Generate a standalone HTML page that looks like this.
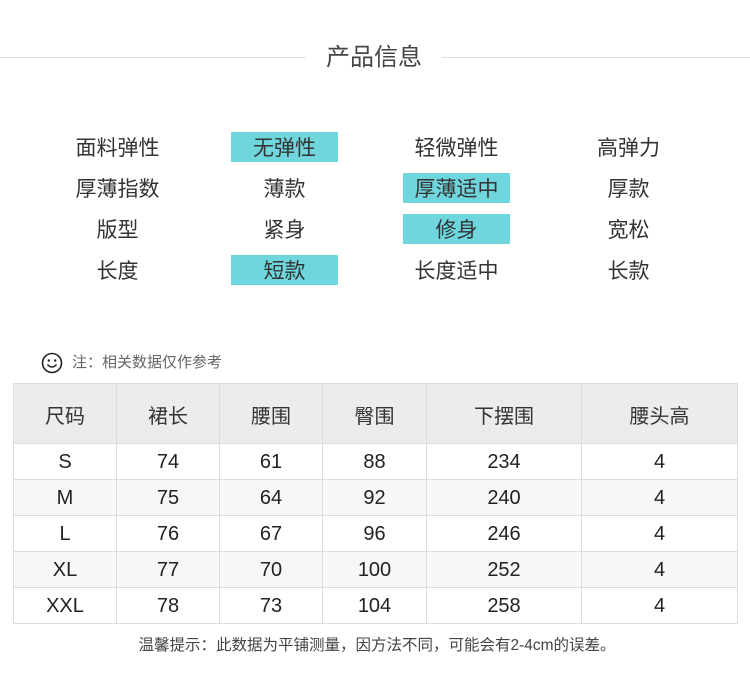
<!DOCTYPE html>
<html><head><meta charset="utf-8"><style>
body{margin:0;width:750px;height:681px;background:#fff;font-family:"Liberation Sans","Noto Sans CJK SC",sans-serif;color:#333;position:relative;overflow:hidden}
.abs{position:absolute}
.t{position:absolute;width:107px;height:30px;line-height:33px;text-align:center;font-size:21px;color:#333}
.hl{background:#6fd6de}
table{position:absolute;left:13px;top:383px;border-collapse:collapse;font-size:20px;color:#222}
td{border:1px solid #ddd;text-align:center;padding:0;padding-top:2px}
tr.h td{height:57px;background:#ececec;color:#333}
tr.r td{height:33px}
tr.g td{background:#f7f7f7}
</style></head><body>
<div class="abs" style="left:0;top:57px;width:306px;height:1px;background:#ddd"></div>
<div class="abs" style="left:442px;top:57px;width:308px;height:1px;background:#ddd"></div>
<div class="abs" style="left:306px;top:42px;width:136px;text-align:center;font-size:24px;color:#444;line-height:32px">产品信息</div>

<div class="t" style="left:64px;top:132px">面料弹性</div>
<div class="t hl" style="left:231px;top:132px">无弹性</div>
<div class="t" style="left:403px;top:132px">轻微弹性</div>
<div class="t" style="left:575px;top:132px">高弹力</div>
<div class="t" style="left:64px;top:173px">厚薄指数</div>
<div class="t" style="left:231px;top:173px">薄款</div>
<div class="t hl" style="left:403px;top:173px">厚薄适中</div>
<div class="t" style="left:575px;top:173px">厚款</div>
<div class="t" style="left:64px;top:214px">版型</div>
<div class="t" style="left:231px;top:214px">紧身</div>
<div class="t hl" style="left:403px;top:214px">修身</div>
<div class="t" style="left:575px;top:214px">宽松</div>
<div class="t" style="left:64px;top:255px">长度</div>
<div class="t hl" style="left:231px;top:255px">短款</div>
<div class="t" style="left:403px;top:255px">长度适中</div>
<div class="t" style="left:575px;top:255px">长款</div>

<svg class="abs" style="left:41px;top:352px" width="22" height="22" viewBox="0 0 22 22"><circle cx="11" cy="11" r="9.5" fill="none" stroke="#222" stroke-width="1.6"/><circle cx="7.8" cy="8.5" r="1.2" fill="#222"/><circle cx="14.2" cy="8.5" r="1.2" fill="#222"/><path d="M6.5 12.5 Q11 17.5 15.5 12.5" fill="none" stroke="#222" stroke-width="1.5"/></svg>
<div class="abs" style="left:72px;top:353px;font-size:15px;color:#666;line-height:20px">注：相关数据仅作参考</div>

<table>
<tr class="h"><td style="width:102px">尺码</td><td style="width:102px">裙长</td><td style="width:102px">腰围</td><td style="width:103px">臀围</td><td style="width:154px">下摆围</td><td style="width:155px">腰头高</td></tr>
<tr class="r"><td>S</td><td>74</td><td>61</td><td>88</td><td>234</td><td>4</td></tr>
<tr class="r g"><td>M</td><td>75</td><td>64</td><td>92</td><td>240</td><td>4</td></tr>
<tr class="r"><td>L</td><td>76</td><td>67</td><td>96</td><td>246</td><td>4</td></tr>
<tr class="r g"><td>XL</td><td>77</td><td>70</td><td>100</td><td>252</td><td>4</td></tr>
<tr class="r"><td>XXL</td><td>78</td><td>73</td><td>104</td><td>258</td><td>4</td></tr>
</table>
<div class="abs" style="left:0;width:754px;top:636px;text-align:center;font-size:15.5px;color:#444;line-height:20px">温馨提示：此数据为平铺测量，因方法不同，可能会有2-4cm的误差。</div>
</body></html>
